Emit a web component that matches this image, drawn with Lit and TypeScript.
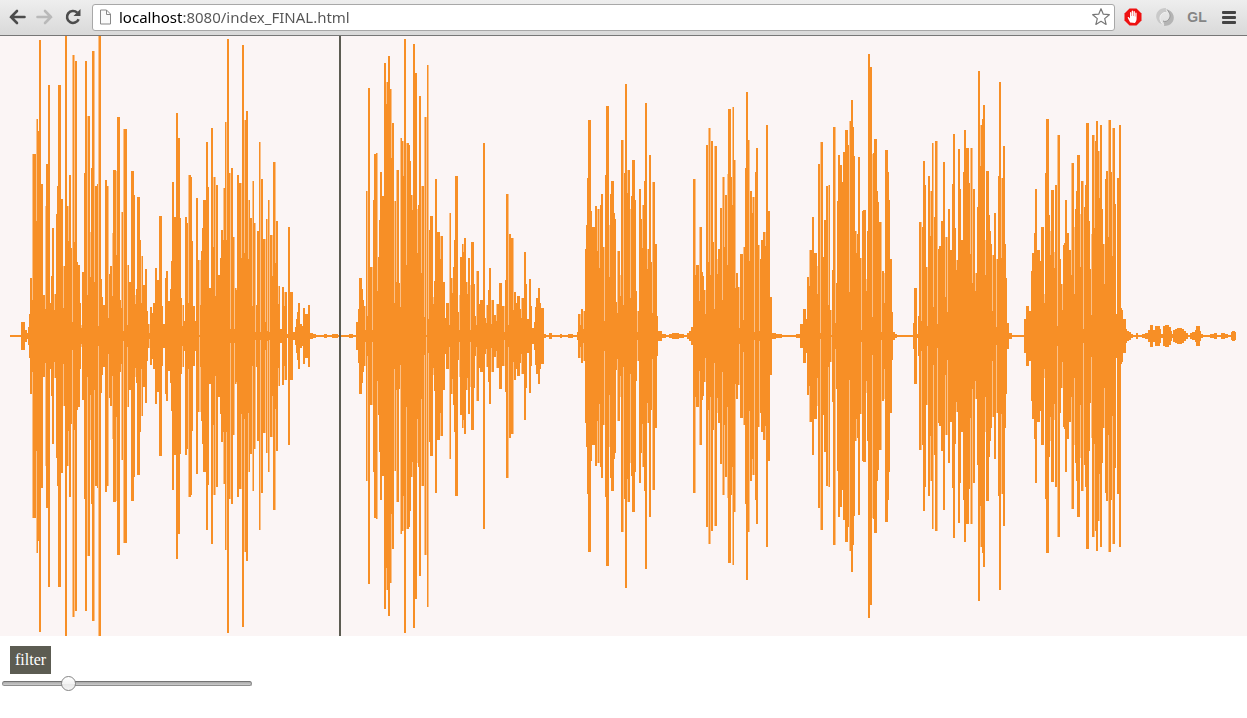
import { LitElement, html, css, svg } from "lit";
import { customElement, state } from "lit/decorators.js";

/* Amplitude envelope: "x:half-height", each level holds until the next x. */
const LEVELS = `
10:1 21:14 25:6 27:3 28:9 29:22 30:58 32:182 36:217 38:205 39:296 41:152 43:41 45:130 46:172 48:251 50:33 51:60 52:108 54:42 56:122 57:150 58:251 61:137 63:70 65:300 67:130 69:161 71:88 72:281 75:275 77:74 78:71 80:33 81:11 82:64 84:163 85:275 87:220 90:104 91:168 92:285 95:150 97:152 98:300 101:57 102:39 103:31 105:156 107:150 109:62 110:70 112:103 113:166 116:165 117:219 120:36 121:124 123:207 127:71 129:54 131:165 134:141 135:41 136:47 137:139 140:96 141:80 143:51 145:67 147:25 148:12 150:29 152:23 153:33 155:68 157:56 159:120 162:30 163:12 165:58 166:65 168:35 170:47 171:75 172:154 174:119 176:223 178:198 180:118 181:38 182:31 184:15 185:119 187:113 188:161 191:159 192:95 193:30 195:15 196:138 198:76 201:85 202:108 203:136 206:194 208:149 209:48 211:208 213:159 216:151 218:61 220:78 221:106 223:148 225:214 227:297 229:163 231:168 233:99 235:48 237:161 239:153 242:291 244:216 246:225 248:136 250:118 252:155 254:113 256:31 257:105 259:194 261:157 263:97 266:117 268:136 270:101 273:174 276:115 278:50 280:7 282:49 284:44 287:2 288:109 290:44 293:4 295:9 296:17 297:24 298:33 300:12 302:10 303:28 305:22 308:31 310:3 313:2 316:1 324:2 327:1 332:2 338:1
347:1 349:2 353:1 356:14 358:27 359:58 362:47 363:36 364:30 366:145 368:248 370:69 373:136 374:182 376:183 378:79 379:116 380:164 382:140 384:273 386:254 388:280 390:247 392:213 394:135 396:166 399:53 400:198 402:195 404:297 406:193 409:191 410:175 411:141 413:292 415:263 417:127 418:131 419:240 421:150 424:219 427:271 429:106 430:120 433:39 434:55 435:157 437:104 440:100 443:54 445:18 446:33 449:123 451:58 453:69 454:96 455:160 458:24 459:41 460:79 462:92 464:98 466:54 468:78 470:51 471:94 474:52 475:20 476:65 479:32 480:36 483:193 485:18 486:31 488:46 489:68 491:36 494:21 496:32 499:53 502:30 505:56 506:142 509:102 511:98 514:44 516:33 517:40 520:27 521:38 524:84 526:52 527:17 529:57 531:30 532:8 534:14 535:29 536:38 538:48 540:33 541:28 544:2 546:1 549:3 552:1 560:2 562:1 568:2 573:1
577:4 578:22 581:27 583:25 585:87 586:111 587:158 588:216 591:125 592:109 595:130 597:127 600:131 601:142 603:89 605:161 606:230 609:111 610:142 611:155 614:123 615:117 616:34 617:85 620:61 621:196 624:163 625:252 627:166 630:127 631:140 632:176 635:136 636:45 637:25 639:147 641:117 642:131 644:155 645:233 647:87 649:181 651:74 652:154 655:92 657:20 658:5 662:2 666:1 669:2 672:3 679:2 684:1 687:3 689:5 691:9 693:157 696:71 699:109 702:64 703:60 704:46 706:191 708:208 711:195 713:94 714:190 717:77 718:87 720:128 722:159 725:141 727:162 728:227 731:159 732:229 734:176 736:63 738:49 740:82 743:89 745:168 746:244 748:196 750:145 752:139 755:164 756:188 758:91 760:77 761:96 763:104 766:211 768:125 770:39 772:3 776:2 782:1
796:2 800:12 803:27 806:17 807:59 809:86 812:119 814:83 817:70 818:172 820:194 823:79 824:116 826:150 828:151 830:26 832:66 833:209 836:53 837:135 838:181 840:171 842:154 843:184 845:206 848:191 849:215 851:236 853:209 854:180 855:105 857:102 858:179 860:78 862:125 863:126 866:57 867:105 868:282 870:269 872:182 873:183 874:197 877:145 878:134 879:114 882:65 884:63 885:186 888:164 889:136 890:77 892:24 893:4 895:2 897:1
913:13 914:48 917:2 918:20 919:114 922:109 923:175 925:151 926:69 928:160 930:145 932:193 934:119 935:195 938:87 939:90 941:115 943:174 945:99 948:127 950:86 952:152 953:202 955:108 956:76 958:187 960:147 961:96 963:164 964:206 966:188 969:153 970:188 973:147 975:63 977:129 978:265 980:211 982:217 983:231 985:96 986:165 989:121 990:105 991:92 992:81 994:123 996:77 998:160 999:254 1001:158 1003:190 1005:92 1006:58 1007:13 1009:3 1012:1
1024:17 1026:30 1029:25 1031:65 1032:83 1034:103 1035:147 1037:86 1040:75 1041:109 1044:42 1045:163 1046:217 1049:121 1050:105 1051:146 1054:84 1055:151 1057:201 1060:77 1061:52 1063:91 1064:93 1065:136 1067:103 1069:86 1071:173 1074:109 1075:127 1076:145 1077:181 1080:122 1081:155 1084:129 1085:151 1086:213 1089:115 1090:67 1091:102 1092:201 1095:195 1096:215 1098:185 1100:211 1102:127 1103:92 1105:157 1106:165 1108:216 1111:164 1112:208 1115:132 1116:22 1117:158 1119:211 1121:28 1122:26 1123:17 1126:7 1127:5 1129:4 1131:2 1133:1 1136:3 1138:1 1142:2 1145:3 1148:6 1150:11 1153:6 1155:10 1160:7 1161:2 1163:10 1165:11 1169:9 1171:5 1172:2 1173:6 1175:7 1177:8 1182:7 1184:5 1186:3 1188:1 1190:3 1192:4 1195:6 1196:10 1200:5 1201:2 1203:1 1210:2 1214:3 1217:1 1221:3 1225:2 1228:1 1231:4 1232:5 1235:4 1236:0`;

/* Faint seams between neighbouring samples: "x:distance from the axis where the seam starts". */
const SEAMS = `
32:36 36:115 45:27 54:26 63:28 68:95 72:14 74:94 81:8 87:41 90:59 94:54 98:10 108:18 112:40 116:81 121:28 123:5 127:11 135:32 141:33 149:3
182:10 188:33 199:1 200:31 213:89 215:40 223:96 226:96 230:7 234:7 236:46 241:78 244:83 248:77 252:30 255:4 260:4 265:14 267:5 269:4 272:60 275:73 278:32 284:30
365:6 367:20 372:6 377:45 386:232 391:178 394:33 396:54 400:29 403:160 406:71 412:126 417:83 421:63 424:19 426:1 428:17 433:32 440:77 449:11 452:43 459:6 463:84 467:42 470:6 476:11 486:13 491:12 496:15 504:4 508:11 513:26 521:18
580:11 583:7 597:85 599:68 604:15 609:59 617:23 620:40 623:31 627:143 630:38 637:4 642:88 647:67 652:23 695:61 699:35 705:22 708:74 710:61 714:27 717:62 722:36 724:89 727:71 732:131 735:48 739:8 743:16 749:75 752:123 754:4 759:5 765:90
809:50 817:42 820:3 828:31 831:1 835:13 849:44 856:83 861:6 866:45 872:19 881:4 884:33 921:15 927:10 930:100 933:29 937:12 945:39 947:24 956:66 970:82 972:53 975:45 980:170 985:61 992:25 996:9 1001:78
1044:33 1050:81 1054:68 1057:10 1062:26 1071:61 1074:42 1080:69 1083:7 1091:21 1094:108 1099:138 1104:52 1108:99 1112:80`;

const AXIS = 300;

const parse = (source: string): number[][] =>
  source.trim().split(/\s+/).map((pair) => pair.split(":").map(Number));

const levels = parse(LEVELS);

const levelAt = (x: number): number => {
  let value = 0;
  for (const [start, height] of levels) {
    if (start > x) break;
    value = height;
  }
  return value;
};

const envelopePath = levels
  .slice(0, -1)
  .map(([x, h], i) => `M${x} ${AXIS - h}H${levels[i + 1][0]}V${AXIS + h}H${x}Z`)
  .join("");

const seamPath = parse(SEAMS)
  .map(([x, start]) => {
    const end = levelAt(x);
    if (end <= start) return "";
    return `M${x} ${AXIS - end}h1V${AXIS - start}h-1ZM${x} ${AXIS + start}h1V${AXIS + end}h-1Z`;
  })
  .join("");

@customElement("browser-toolbar")
export class BrowserToolbar extends LitElement {
  static styles = css`
    :host {
      display: block;
    }
    .bar {
      box-sizing: border-box;
      height: 36px;
      display: flex;
      align-items: center;
      padding: 0 2px 1px 3px;
      background: linear-gradient(#eeeeee, #d9d9d9);
      border-bottom: 1px solid #777777;
    }
    button {
      flex: none;
      display: flex;
      align-items: center;
      justify-content: center;
      width: 28px;
      height: 28px;
      padding: 0;
      border: 0;
      background: none;
    }
    .address {
      flex: 1;
      min-width: 0;
      box-sizing: border-box;
      height: 27px;
      display: flex;
      align-items: center;
      margin: 0 2px 0 5px;
      padding-left: 6px;
      background: #ffffff;
      border: 1px solid #a8a8a8;
      border-radius: 3px;
    }
    .address svg {
      flex: none;
    }
    .address input {
      flex: 1;
      min-width: 0;
      height: 25px;
      margin: 0 0 0 7px;
      padding: 0;
      border: 0;
      outline: 0;
      font: 15px/25px "Noto Sans", "Open Sans", sans-serif;
      color: transparent;
      background: linear-gradient(90deg, #000000 64px, #555555 64px);
      -webkit-background-clip: text;
      background-clip: text;
    }
    .address button {
      width: 26px;
      height: 25px;
    }
    .label {
      font: bold 14px/20px "Liberation Sans", sans-serif;
      color: #858585;
    }
    .extension {
      width: 32px;
    }
  `;

  render() {
    return html`
      <header class="bar">
        <button aria-label="Back">
          <svg width="18" height="16" viewBox="0 0 18 16" fill="none" stroke="#4c4c4c" stroke-width="2.6">
            <path d="M9 2L3 8l6 6M3 8h13.500" stroke-linecap="round" stroke-linejoin="miter" />
          </svg>
        </button>
        <button aria-label="Forward">
          <svg width="18" height="16" viewBox="0 0 18 16" fill="none" stroke="#b9b9b9" stroke-width="2.6">
            <path d="M9 2l6 6-6 6M15 8H1.500" stroke-linecap="round" />
          </svg>
        </button>
        <button aria-label="Reload">
          <svg width="18" height="18" viewBox="0 0 18 18">
            <path d="M14.6 11.2A6 6 0 1 1 13.2 4.6" fill="none" stroke="#4c4c4c" stroke-width="2.6" />
            <path d="M16.5 1v7H9.5z" fill="#4c4c4c" />
          </svg>
        </button>
        <div class="address">
          <svg width="13" height="16" viewBox="0 0 13 16">
            <path d="M1.500 1h6l4 4v10h-10z" fill="#fafafa" stroke="#888888" />
            <path d="M7.500 1v4.500H12" fill="none" stroke="#888888" />
          </svg>
          <input aria-label="Address" spellcheck="false" .value=${"localhost:8080/index_FINAL.html"} />
          <button aria-label="Bookmark this page">
            <svg width="20" height="20" viewBox="0 0 20 20">
              <path
                d="M10 1.700l2.300 5.500 6 .5-4.600 3.900 1.400 5.800L10 14.300l-5.100 3.100 1.400-5.800L1.700 7.700l6-.5z"
                fill="#ffffff" stroke="#777777" stroke-width="1.200" stroke-linejoin="round" />
            </svg>
          </button>
        </div>
        <button class="extension" aria-label="Content blocker">
          <svg width="18" height="18" viewBox="0 0 18 18">
            <path d="M5.500 .5h7l5 5v7l-5 5h-7l-5-5v-7z" fill="#ee1111" />
            <path
              d="M6.200 14.500L3.800 10c-.4-.9.6-1.400 1.200-.6l1 1.200V4.700c0-1 1.300-1 1.300 0V8h.4V3.300c0-1 1.400-1 1.400 0V8h.4V3.700c0-1 1.400-1 1.400 0V8.400h.4V5.200c0-1 1.300-1 1.300 0v5.600c0 2-.8 3-1.600 4.200z"
              fill="#ffffff" />
          </svg>
        </button>
        <button class="extension" aria-label="Sync">
          <svg width="20" height="20" viewBox="0 0 20 20">
            <path d="M11 1C4 1 0 6 1.500 11.500 2.500 15 5 17 8 17.500 5 14 4 11 6 8c1.500-2.500 4-3 6-2C11 4 10.500 2.500 11 1z" fill="#c9c9c9" />
            <path d="M9 19c7 0 11-5 9.500-10.500C17.500 5 15 3 12 2.500c3 3.500 4 6.500 2 9.500-1.500 2.500-4 3-6 2 1 2 1.500 3.500 1 5z" fill="#b4b4b4" />
            <path d="M8 17.500C5 14 4 11 6 8c1.500-2.500 4-3 6-2" fill="none" stroke="#f2f2f2" />
            <path d="M12 2.500c3 3.500 4 6.500 2 9.500-1.500 2.500-4 3-6 2" fill="none" stroke="#989898" />
          </svg>
        </button>
        <button class="extension" aria-label="GL"><span class="label">GL</span></button>
        <button class="extension" aria-label="Menu">
          <svg width="14" height="14" viewBox="0 0 14 14" fill="#444444">
            <rect y="1" width="14" height="3" rx="1" />
            <rect y="6" width="14" height="3" rx="1" />
            <rect y="11" width="14" height="3" rx="1" />
          </svg>
        </button>
      </header>
    `;
  }
}

@customElement("wave-form")
export class WaveForm extends LitElement {
  static styles = css`
    :host {
      display: block;
      background: #fbf5f5;
    }
    .plot {
      display: block;
      width: 100%;
      height: 600px;
    }
    .wave {
      fill: #f78f26;
    }
    .seam {
      fill: #fbc088;
    }
    .playhead {
      fill: #5c5c52;
    }
  `;

  render() {
    return html`
      <svg class="plot" viewBox="0 0 1247 600" preserveAspectRatio="none" role="img" aria-label="Audio waveform">
        ${svg`
          <g shape-rendering="crispEdges">
            <path class="wave" d=${envelopePath}></path>
            <path class="seam" d=${seamPath}></path>
            <rect class="playhead" x="339" width="2" height="600"></rect>
          </g>
        `}
      </svg>
    `;
  }
}

@customElement("app-root")
export class AppRoot extends LitElement {
  @state() private filter = 25;

  static styles = css`
    :host {
      display: block;
      min-height: 100vh;
      background: #ffffff;
    }
    .controls {
      display: flex;
      flex-direction: column;
      align-items: flex-start;
    }
    .name {
      margin: 10px 10px 0;
      padding: 5px;
      background: #5c5c52;
      color: #ffffff;
      font: 16px/18px "Liberation Serif", serif;
    }
    .slider {
      appearance: none;
      width: 250px;
      height: 15px;
      margin: 2px;
      background: none;
    }
    .slider::-webkit-slider-runnable-track {
      box-sizing: border-box;
      height: 5px;
      border: 1px solid #8e8e8e;
      border-top-color: #737373;
      border-radius: 3px;
      background: linear-gradient(#aaaaaa, #cccccc);
    }
    .slider::-webkit-slider-thumb {
      appearance: none;
      box-sizing: border-box;
      width: 15px;
      height: 15px;
      margin-top: -6px;
      border: 1px solid #858585;
      border-radius: 50%;
      background: linear-gradient(#ffffff, #f4f4f4 50%, #e8e8e8 50%, #f4f4f4);
    }
  `;

  private onInput(event: Event) {
    this.filter = Number((event.target as HTMLInputElement).value);
  }

  render() {
    return html`
      <browser-toolbar></browser-toolbar>
      <main>
        <wave-form></wave-form>
        <section class="controls">
          <label class="name" for="filter">filter</label>
          <input class="slider" id="filter" type="range" min="0" max="100" .value=${String(this.filter)} @input=${this.onInput} />
        </section>
      </main>
    `;
  }
}
